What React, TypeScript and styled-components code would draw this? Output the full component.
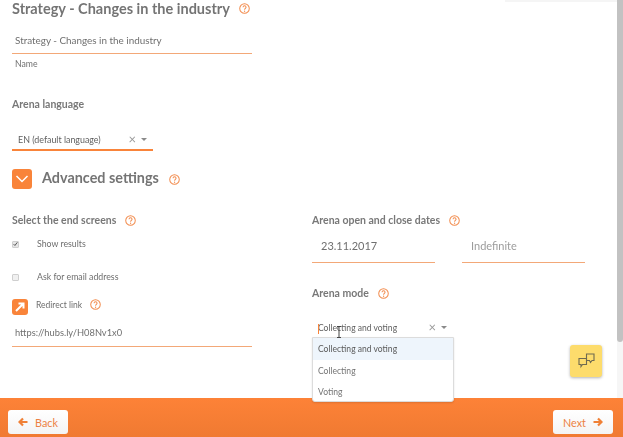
import React from "react";
import styled, { createGlobalStyle } from "styled-components";

const orange = "#f9843a";
const line = "#f3a878";

const Global = createGlobalStyle`
  html, body { margin: 0; padding: 0; width: 623px; height: 437px; overflow: hidden; background: #fff; }
  * { box-sizing: border-box; }
  body { font-family: Lato, "Liberation Sans", Arial, sans-serif; color: #777; }
`;

const Page = styled.div`
  position: relative;
  width: 623px;
  height: 437px;
  display: flex;
  flex-direction: column;
  overflow: hidden;
  filter: blur(0.3px);
`;
const Body = styled.div`
  flex: 1;
  min-height: 0;
  display: flex;
`;
const Content = styled.main`
  flex: 1;
  min-width: 0;
  padding: 0 0 0 12px;
`;
const Track = styled.div`
  width: 6px;
  background: #f6f6f6;
`;
const Thumb = styled.div`
  height: 342px;
  background: #c2c2c2;
  border-radius: 0 0 3px 3px;
`;
const TopShade = styled.div`
  position: absolute;
  top: 0;
  left: 505px;
  width: 112px;
  height: 2px;
  background: #f5f5f5;
`;
const TitleRow = styled.div`
  display: flex;
  align-items: center;
  gap: 9px;
  height: 17px;
`;
const Title = styled.h1`
  margin: 0;
  font-size: 14.5px;
  line-height: 17px;
  font-weight: 700;
  color: #747474;
  white-space: nowrap;
`;
const Field = styled.div<{ $w: number; $h: number; $size: number; $pad: number; $muted?: boolean; $bottom?: number }>`
  width: ${(p) => p.$w}px;
  height: ${(p) => p.$h}px;
  padding: 0 4px ${(p) => p.$bottom ?? 0}px ${(p) => p.$pad}px;
  display: flex;
  align-items: center;
  border-bottom: 1px solid ${line};
  font-size: ${(p) => p.$size}px;
  color: ${(p) => (p.$muted ? "#9c9c9c" : "#6f6f6f")};
  white-space: nowrap;
`;
const NameBlock = styled.div`
  margin-top: 11px;
`;
const Caption = styled.div`
  margin: 4px 0 0 3px;
  font-size: 8.7px;
  line-height: 11px;
  color: #707070;
`;
const Heading = styled.div<{ $mt: number }>`
  display: flex;
  align-items: center;
  gap: 9px;
  margin-top: ${(p) => p.$mt}px;
  font-size: 10.5px;
  line-height: 14px;
  font-weight: 700;
  color: #787878;
  white-space: nowrap;
`;
const SelectBox = styled.div<{ $w: number; $size: number; $line?: boolean }>`
  position: relative;
  width: ${(p) => p.$w}px;
  height: 26px;
  padding: 5px 6px 0 6px;
  display: flex;
  align-items: center;
  border-bottom: ${(p) => (p.$line ? `2px solid ${orange}` : "none")};
  font-size: ${(p) => p.$size}px;
  color: #5f5f5f;
  white-space: nowrap;
`;
const SelectValue = styled.span`
  flex: 1;
`;
const LangSelect = styled.div`
  margin-top: 14px;
`;
const Clear = styled.span`
  font-size: 13px;
  line-height: 11px;
  color: #9a9a9a;
  margin-right: 5px;
`;
const Caret = styled.span`
  width: 0;
  height: 0;
  border-left: 3px solid transparent;
  border-right: 3px solid transparent;
  border-top: 3px solid #8a8a8a;
`;
const AdvancedRow = styled.div`
  display: flex;
  align-items: center;
  margin-top: 18px;
  height: 20px;
`;
const SquareIcon = styled.div<{ $s: number }>`
  width: ${(p) => p.$s}px;
  height: ${(p) => p.$s}px;
  flex: none;
  border-radius: 3px;
  background: ${orange};
  display: flex;
  align-items: center;
  justify-content: center;
`;
const AdvancedTitle = styled.h2`
  margin: 0 10px;
  font-size: 14.4px;
  font-weight: 700;
  color: #747474;
  white-space: nowrap;
  position: relative;
  top: -2px;
`;
const Columns = styled.div`
  display: grid;
  grid-template-columns: 300px 273px;
  margin-top: 24px;
`;
const Column = styled.section`
  display: flex;
  flex-direction: column;
`;
const CheckRow = styled.div<{ $mt: number }>`
  display: flex;
  align-items: center;
  margin-top: ${(p) => p.$mt}px;
  font-size: 8.75px;
  line-height: 12px;
  color: #6e6e6e;
  white-space: nowrap;
`;
const CheckBox = styled.span<{ $on?: boolean }>`
  width: 7px;
  height: 7px;
  margin-right: 18px;
  border-radius: 1px;
  background: ${(p) => (p.$on ? "#e6e6e6" : "#f0f0f0")};
  border: 1px solid #cfcfcf;
  display: flex;
  align-items: center;
  justify-content: center;
`;
const RedirectRow = styled.div`
  display: flex;
  align-items: flex-start;
  margin-top: 16px;
  height: 16px;
`;
const RedirectLabel = styled.span`
  margin: 0 8px;
  font-size: 8.5px;
  line-height: 12px;
  color: #6e6e6e;
`;
const UrlField = styled.div`
  margin-top: 5px;
`;
const Dates = styled.div`
  display: flex;
  gap: 27px;
  margin-top: 6px;
`;
const ModeWrap = styled.div`
  position: relative;
  margin-top: 12px;
`;
const Cursor = styled.span`
  position: absolute;
  left: 6px;
  top: 12px;
  width: 1px;
  height: 10px;
  background: ${orange};
`;
const Menu = styled.ul`
  position: absolute;
  left: 0;
  top: 25px;
  width: 142px;
  height: 65px;
  margin: 0;
  padding: 0;
  list-style: none;
  background: #fff;
  border: 1px solid #dcdcdc;
  border-radius: 0 0 3px 3px;
  box-shadow: 0 1px 2px rgba(0, 0, 0, 0.12);
  z-index: 2;
`;
const MenuItem = styled.li<{ $active?: boolean }>`
  height: ${(p) => (p.$active ? 22 : 21)}px;
  padding: 0 5px;
  display: flex;
  align-items: center;
  font-size: 8.55px;
  color: ${(p) => (p.$active ? "#5a5a5a" : "#747474")};
  background: ${(p) => (p.$active ? "#eef5fc" : "transparent")};
`;
const IBeam = styled.svg`
  position: absolute;
  left: 24px;
  top: 14px;
  z-index: 3;
`;
const ChatButton = styled.div`
  position: absolute;
  left: 570px;
  top: 345px;
  width: 32px;
  height: 32px;
  border-radius: 3px;
  background: #fddc6c;
  box-shadow: 0 1px 3px rgba(0, 0, 0, 0.3);
  display: flex;
  align-items: center;
  justify-content: center;
`;
const Footer = styled.footer`
  height: 39px;
  flex: none;
  padding: 12px 10px 0 8px;
  display: flex;
  justify-content: space-between;
  align-items: flex-start;
  background: linear-gradient(#fd8237, #f07a32);
`;
const NavButton = styled.div`
  width: 60px;
  height: 24px;
  display: flex;
  align-items: center;
  justify-content: center;
  gap: 7px;
  border-radius: 3px;
  background: linear-gradient(#fff, #f4f4f4);
  font-size: 10.8px;
  color: #ec8143;
`;

const Help = ({ s = 11 }: { s?: number }) => (
  <svg width={s} height={s} viewBox="0 0 12 12" fill="none" style={{ flex: "none" }}>
    <circle cx="6" cy="6" r="5.2" stroke="#f28c4e" strokeWidth="1.1" />
    <path d="M4.4 4.7c0-2.1 3.3-2.1 3.3 0 0 1.2-1.6 1.3-1.6 2.6" stroke="#f28c4e" strokeWidth="1.1" />
    <circle cx="6.1" cy="9" r=".7" fill="#f28c4e" />
  </svg>
);

const Arrow = ({ flip }: { flip?: boolean }) => (
  <svg width="10" height="10" viewBox="0 0 10 10" style={flip ? { transform: "scaleX(-1)" } : undefined}>
    <path d="M0.5 5h7M5 1.5 8.5 5 5 8.5" fill="none" stroke="#f08036" strokeWidth="2.2" />
  </svg>
);

export default function App() {
  return (
    <Page>
      <Global />
      <TopShade />
      <Body>
        <Content>
          <TitleRow>
            <Title>Strategy - Changes in the industry</Title>
            <Help />
          </TitleRow>
          <NameBlock>
            <Field $w={240} $h={26} $size={9.9} $pad={3} $bottom={2}>Strategy - Changes in the industry</Field>
            <Caption>Name</Caption>
          </NameBlock>
          <Heading $mt={28}>Arena language</Heading>
          <LangSelect>
            <SelectBox $w={141} $size={8.9} $line>
              <SelectValue>EN (default language)</SelectValue>
              <Clear>×</Clear>
              <Caret />
            </SelectBox>
          </LangSelect>
          <AdvancedRow>
            <SquareIcon $s={20}>
              <svg width="14" height="10" viewBox="0 0 14 10">
                <path d="M1.5 2 7 7.5 12.5 2" fill="none" stroke="#fff" strokeWidth="1.5" />
              </svg>
            </SquareIcon>
            <AdvancedTitle>Advanced settings</AdvancedTitle>
            <Help />
          </AdvancedRow>
          <Columns>
            <Column>
              <Heading $mt={0}>Select the end screens<Help /></Heading>
              <CheckRow $mt={11}>
                <CheckBox $on>
                  <svg width="6" height="6" viewBox="0 0 6 6">
                    <path d="M.8 3.2 2.3 4.8 5.2 1" fill="none" stroke="#555" strokeWidth="1.2" />
                  </svg>
                </CheckBox>
                Show results
              </CheckRow>
              <CheckRow $mt={21}><CheckBox />Ask for email address</CheckRow>
              <RedirectRow>
                <SquareIcon $s={16}>
                  <svg width="12" height="12" viewBox="0 0 12 12">
                    <path d="M2 10 9 3M4.5 2.5h5v5" fill="none" stroke="#fff" strokeWidth="2" />
                  </svg>
                </SquareIcon>
                <RedirectLabel>Redirect link</RedirectLabel>
                <Help />
              </RedirectRow>
              <UrlField>
                <Field $w={240} $h={27} $size={9.3} $pad={3} $bottom={2}>https://hubs.ly/H08Nv1x0</Field>
              </UrlField>
            </Column>
            <Column>
              <Heading $mt={0}>Arena open and close dates<Help /></Heading>
              <Dates>
                <Field $w={123} $h={30} $size={11} $pad={9} $bottom={4}>23.11.2017</Field>
                <Field $w={123} $h={30} $size={11} $pad={9} $bottom={4} $muted>Indefinite</Field>
              </Dates>
              <Heading $mt={23}>Arena mode<Help /></Heading>
              <ModeWrap>
                <SelectBox $w={141} $size={8.55}>
                  <SelectValue>Collecting and voting</SelectValue>
                  <Clear>×</Clear>
                  <Caret />
                </SelectBox>
                <Cursor />
                <IBeam width="6" height="12" viewBox="0 0 6 12">
                  <path d="M1 .5h4M3 .5v11M1 11.5h4" fill="none" stroke="#444" strokeWidth="1" />
                </IBeam>
                <Menu>
                  <MenuItem $active>Collecting and voting</MenuItem>
                  <MenuItem>Collecting</MenuItem>
                  <MenuItem>Voting</MenuItem>
                </Menu>
              </ModeWrap>
            </Column>
          </Columns>
        </Content>
        <Track><Thumb /></Track>
      </Body>
      <ChatButton>
        <svg width="17" height="16" viewBox="0 0 17 16" fill="none" stroke="#6f6a50" strokeWidth="1.1">
          <path d="M1 5.5h7.5v6H4.5L3 13.5v-2H1z" />
          <path d="M8.5 7.5V1h7.5v6.5h-2L12.5 9.5 11.5 7.5H8.5" />
        </svg>
      </ChatButton>
      <Footer>
        <NavButton><Arrow flip />Back</NavButton>
        <NavButton>Next<Arrow /></NavButton>
      </Footer>
    </Page>
  );
}
